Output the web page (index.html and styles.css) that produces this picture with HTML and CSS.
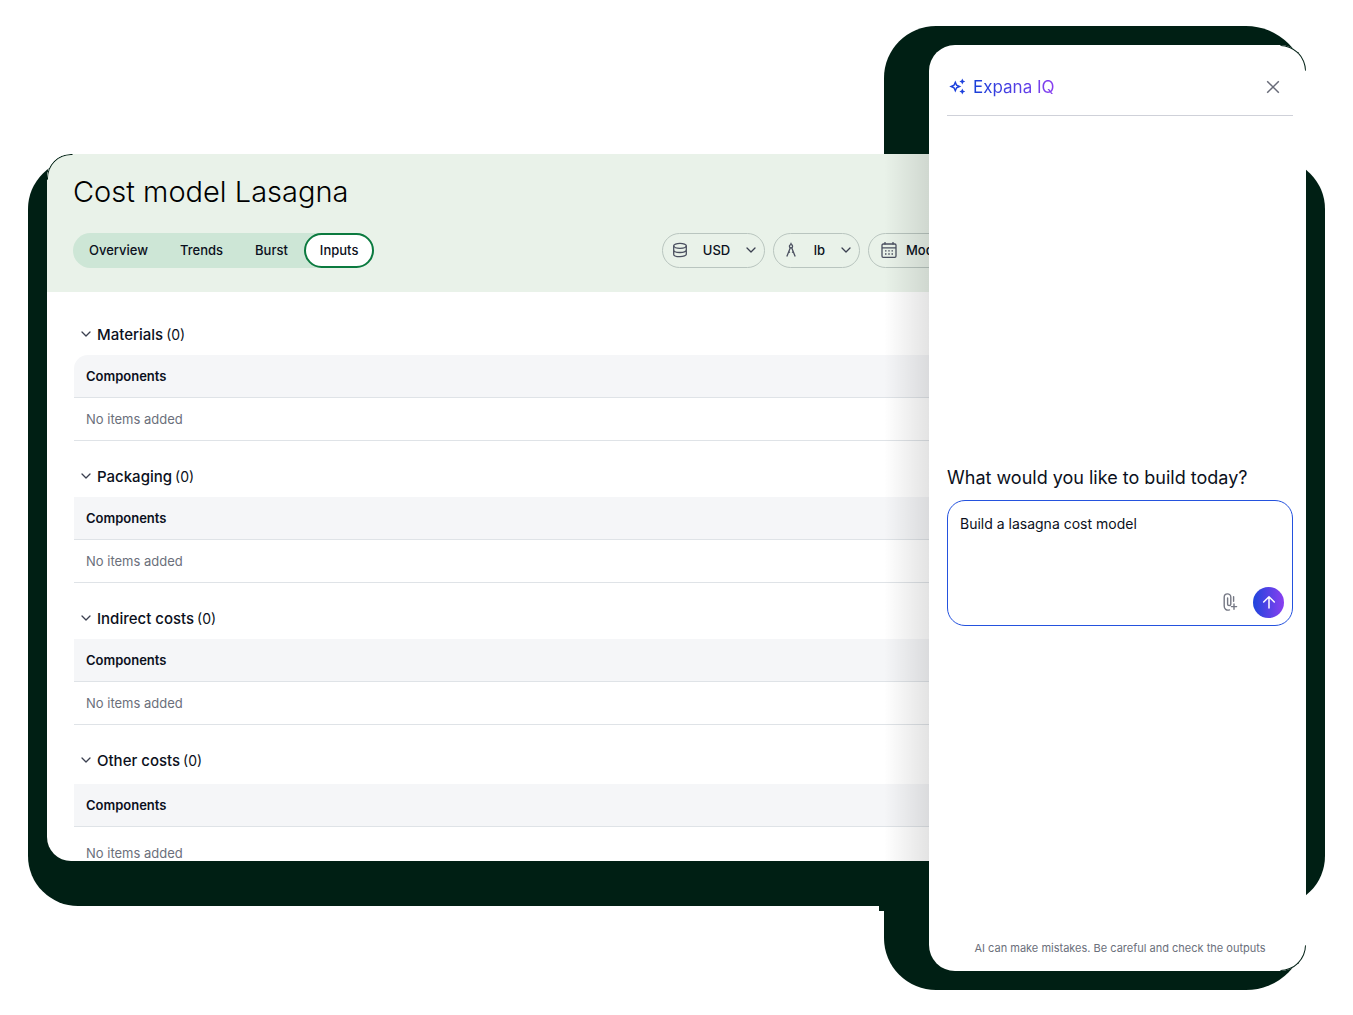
FILE: index.html
```html
<!DOCTYPE html>
<html lang="en">
<head>
<meta charset="utf-8">
<meta name="viewport" content="width=device-width, initial-scale=1">
<title>Cost model Lasagna</title>
<link rel="stylesheet" href="styles.css">
</head>
<body>
<div class="stage">
  <div class="backdrop backdrop-wide"></div>
  <div class="backdrop backdrop-tall"></div>

  <main class="model">
    <header class="model-header">
      <h1 class="model-title">Cost model Lasagna</h1>
      <div class="toolbar">
        <nav class="tabs">
          <button class="tab" type="button">Overview</button>
          <button class="tab" type="button">Trends</button>
          <button class="tab" type="button">Burst</button>
          <button class="tab tab-active" type="button">Inputs</button>
        </nav>
        <div class="filters">
          <button class="filter filter-currency" type="button">
            <svg class="icon" width="16" height="16" viewBox="0 0 16 16"><ellipse cx="8" cy="3.8" rx="6.3" ry="2.5"/><path d="M1.700 3.800v8.400c0 1.400 2.800 2.500 6.300 2.500s6.300-1.100 6.300-2.500V3.800M1.700 8c0 1.400 2.800 2.500 6.300 2.500s6.300-1.100 6.300-2.500"/></svg>
            <span>USD</span>
            <svg class="chevron" width="12" height="12" viewBox="0 0 12 12"><path d="M2 4l4 4 4-4"/></svg>
          </button>
          <button class="filter filter-unit" type="button">
            <svg class="icon" width="16" height="16" viewBox="0 0 16 16"><path d="M8 .8v2"/><circle cx="8" cy="4.300" r="1.600"/><path d="M7.300 5.800L3.800 14.600M8.700 5.800l3.500 8.800M5.800 9.500l1 1.200M10.200 9.500l-1 1.200"/></svg>
            <span>lb</span>
            <svg class="chevron" width="12" height="12" viewBox="0 0 12 12"><path d="M2 4l4 4 4-4"/></svg>
          </button>
          <button class="filter filter-model" type="button">
            <svg class="icon" width="16" height="16" viewBox="0 0 16 16"><rect x="1" y="2" width="14" height="13.300" rx="1.200"/><path d="M1 5.800h14M4 0v2.500M12 0v2.500"/><path d="M4 8.800h1.500M7.250 8.800h1.500M10.500 8.800H12M4 12h1.500M7.250 12h1.500M10.500 12H12"/></svg>
            <span>Mod</span>
          </button>
        </div>
      </div>
    </header>

    <div class="sections">
      <section class="section">
        <h2 class="section-title"><svg class="chevron" width="12" height="12" viewBox="0 0 12 12"><path d="M2 4l4 4 4-4"/></svg>Materials <span class="count">(0)</span></h2>
        <table class="items items-first">
          <thead><tr><th>Components</th></tr></thead>
          <tbody><tr><td>No items added</td></tr></tbody>
        </table>
      </section>
      <section class="section">
        <h2 class="section-title"><svg class="chevron" width="12" height="12" viewBox="0 0 12 12"><path d="M2 4l4 4 4-4"/></svg>Packaging <span class="count">(0)</span></h2>
        <table class="items">
          <thead><tr><th>Components</th></tr></thead>
          <tbody><tr><td>No items added</td></tr></tbody>
        </table>
      </section>
      <section class="section">
        <h2 class="section-title"><svg class="chevron" width="12" height="12" viewBox="0 0 12 12"><path d="M2 4l4 4 4-4"/></svg>Indirect costs <span class="count">(0)</span></h2>
        <table class="items">
          <thead><tr><th>Components</th></tr></thead>
          <tbody><tr><td>No items added</td></tr></tbody>
        </table>
      </section>
      <section class="section">
        <h2 class="section-title"><svg class="chevron" width="12" height="12" viewBox="0 0 12 12"><path d="M2 4l4 4 4-4"/></svg>Other costs <span class="count">(0)</span></h2>
        <table class="items items-last">
          <thead><tr><th>Components</th></tr></thead>
          <tbody><tr><td>No items added</td></tr></tbody>
        </table>
      </section>
    </div>
  </main>

  <div class="model-shade"></div>

  <aside class="assistant">
    <header class="assistant-header">
      <svg class="sparkle" width="17" height="17" viewBox="0 0 17 17"><path class="sparkle-main" d="M6.300 4.300L7.600 7.200L10.500 8.500L7.600 9.800L6.300 12.700L5 9.800L2.100 8.500L5 7.200Z"/><path class="sparkle-dot" d="M13.300 .600l.9 2 2 .9-2 .9-.9 2-.9-2-2-.9 2-.9zM13.300 10.600l.9 2 2 .9-2 .9-.9 2-.9-2-2-.9 2-.9z"/></svg>
      <span class="assistant-name">Expana IQ</span>
      <button class="close" type="button" aria-label="Close"><svg width="14" height="14" viewBox="0 0 14 14"><path d="M1.200 1.200l11.600 11.600M12.800 1.200L1.200 12.800"/></svg></button>
    </header>
    <div class="assistant-body">
      <label class="question" for="prompt">What would you like to build today?</label>
      <div class="composer">
        <textarea class="prompt" id="prompt">Build a lasagna cost model</textarea>
        <div class="composer-actions">
          <button class="attach" type="button" aria-label="Attach"><svg width="16" height="20" viewBox="0 0 16 20"><path d="M7.500 17.900c-3.200.8-5.300-.9-5.300-3.900V5.200C2.200.800 8.800.800 8.800 5.200v7c0 1.800-3.200 1.800-3.200 0V6M11.600 4.800v4.400M12 12v5.200M9.400 14.600h5.200"/></svg></button>
          <button class="send" type="submit" aria-label="Send"><svg width="16" height="16" viewBox="0 0 16 16"><path d="M8 14V2.700M2.700 8L8 2.700 13.300 8"/></svg></button>
        </div>
      </div>
    </div>
    <p class="disclaimer">AI can make mistakes. Be careful and check the outputs</p>
  </aside>
</div>
</body>
</html>
```
FILE: styles.css
```css
* { box-sizing: border-box; }

body {
  margin: 0;
  background: #fff;
  color: #0b1020;
  font-family: Inter, "Liberation Sans", sans-serif;
  font-size: 13px;
}

button, textarea { font: inherit; color: inherit; }
button { padding: 0; border: 0; background: none; }
svg { flex: none; fill: none; }

.stage {
  display: grid;
  grid-template-columns: 19px minmax(0, 1fr) 45px 377px 19px;
  grid-template-rows: 19px 109px 5px minmax(0, 1fr) 45px 65px 19px;
  height: 100vh;
  min-height: 900px;
  padding: 26px 28px 25px;
}

/* Dark shapes behind the two cards */
.backdrop { background: #001f14; }
.backdrop-wide { grid-area: 4 / 1 / 6 / 6; border-radius: 50px; }
.backdrop-tall { grid-area: 1 / 3 / 8 / 5; border-radius: 52px 60px 60px 52px; position: relative; }
.backdrop-tall::before {
  content: "";
  position: absolute;
  left: -5px;
  bottom: 79px;
  width: 5px;
  height: 5px;
  background: #001f14;
}

/* Cost model card */
.model {
  grid-area: 3 / 2 / 5 / 4;
  position: relative;
  overflow: hidden;
  border-radius: 24px 0 0 24px;
  background: #fff;
}
.model::before,
.assistant::before,
.assistant::after {
  content: "";
  position: absolute;
  width: 24px;
  height: 24px;
  border: 1px solid transparent;
}
.model::before {
  top: 0;
  left: 0;
  border-top-color: #001f14;
  border-left-color: #001f14;
  border-radius: 24px 0 0 0;
}

.model-header { height: 138px; padding: 17px 0 0 26px; background: #e9f2e9; }
.model-title { margin: 0; font-size: 29px; line-height: 42px; font-weight: 300; color: #000; }
.toolbar { display: flex; align-items: center; justify-content: space-between; margin-top: 20px; }

.tabs { display: flex; height: 35px; border-radius: 18px; background: #cde6d6; }
.tab { padding: 0 16px 1px; font-weight: 500; }
.tab-active { padding: 0 14px 1px; border: 2px solid #0b7a3f; border-radius: 18px; background: #fff; }

.filters { display: flex; gap: 8px; margin-right: -49px; }
.filter {
  display: flex;
  align-items: center;
  justify-content: space-between;
  height: 35px;
  padding: 0 7px 1px 9px;
  border: 1px solid #b9c5bf;
  border-radius: 18px;
  font-weight: 500;
}
.filter-currency { width: 103px; }
.filter-unit { width: 87px; }
.filter-model { width: 110px; justify-content: flex-start; gap: 9px; padding-left: 12px; }
.icon { stroke: #4b5060; stroke-width: 1.3; }
.chevron { stroke: #3b4050; stroke-width: 1.3; stroke-linecap: round; stroke-linejoin: round; }

.sections { padding: 7px 0 0 27px; }
.section-title {
  display: flex;
  align-items: center;
  gap: 3px;
  height: 56px;
  margin: 0;
  padding: 14px 0 0 6px;
  font-size: 15px;
  font-weight: 500;
}
.section-title .chevron { margin-right: 2px; }
.count { font-size: 14px; font-weight: 400; }

.items { width: 100%; border-collapse: separate; border-spacing: 0; }
.items th,
.items td {
  height: 43px;
  padding: 0 12px;
  border-bottom: 1px solid #dfe3e7;
  text-align: left;
}
.items th { background: #f5f6f8; font-weight: 600; }
.items td { color: #6b6f7b; }
.items-first th { border-top-left-radius: 14px; }
.items-last { margin-top: 3px; }
.items-last td { height: 52px; }

/* Soft shade the panel casts on the card */
.model-shade {
  grid-area: 3 / 3 / 5 / 4;
  position: relative;
  background: linear-gradient(90deg, rgba(0, 0, 0, 0), rgba(0, 0, 0, 0.11));
}

/* Assistant panel */
.assistant {
  grid-area: 2 / 4 / 7 / 5;
  position: relative;
  display: flex;
  flex-direction: column;
  padding: 0 13px 0 18px;
  border-radius: 26px;
  background: #fff;
}
.assistant::before {
  top: 0;
  right: 0;
  border-top-color: #001f14;
  border-right-color: #001f14;
  border-radius: 0 26px 0 0;
}
.assistant::after {
  bottom: 0;
  right: 0;
  border-bottom-color: #001f14;
  border-right-color: #001f14;
  border-radius: 0 0 26px 0;
}

.assistant-header {
  display: flex;
  align-items: center;
  gap: 7px;
  height: 71px;
  padding: 13px 13px 0 2px;
  border-bottom: 1px solid #cfd1d9;
}
.sparkle-main { stroke: #1d41dc; stroke-width: 1.5; stroke-linejoin: miter; }
.sparkle-dot { fill: #1d41dc; }
.assistant-name {
  background: linear-gradient(90deg, #1740d8, #8a3ff0);
  background-clip: text;
  color: transparent;
  font-size: 17px;
}
.close { display: flex; margin-left: auto; }
.close svg { stroke: #686b78; stroke-width: 1.5; }

.assistant-body { display: flex; flex: 1; flex-direction: column; justify-content: center; padding-top: 50px; }
.question { font-size: 18px; line-height: 24px; margin-bottom: 10px; }
.composer {
  display: flex;
  flex-direction: column;
  height: 126px;
  padding: 12px 8px 7px 12px;
  border: 1px solid #2452de;
  border-radius: 18px;
}
.prompt {
  flex: 1;
  min-height: 0;
  padding: 0;
  border: 0;
  outline: 0;
  resize: none;
  background: none;
  font-size: 14px;
  line-height: 22px;
}
.composer-actions { display: flex; align-items: center; justify-content: flex-end; gap: 15px; }
.attach { display: flex; }
.attach svg { stroke: #747783; stroke-width: 1.4; stroke-linecap: round; }
.send {
  display: flex;
  align-items: center;
  justify-content: center;
  width: 31px;
  height: 31px;
  border-radius: 50%;
  background: linear-gradient(90deg, #1f45dc, #8a3ff0);
}
.send svg { stroke: #fff; stroke-width: 1.5; stroke-linecap: round; stroke-linejoin: round; }
.disclaimer { margin: 0; height: 46px; font-size: 11px; line-height: 46px; text-align: center; color: #6b6f7b; }
```
